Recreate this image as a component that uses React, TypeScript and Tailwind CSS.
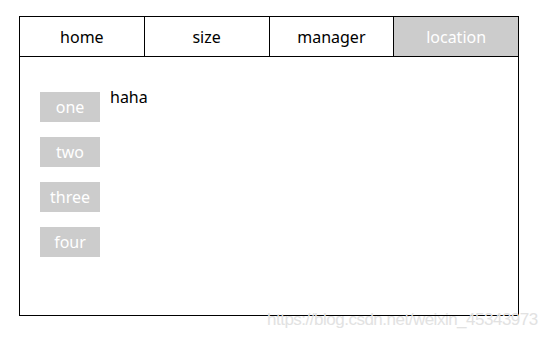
import React from "react";

const tabs = ["home", "size", "manager", "location"];
const buttons = ["one", "two", "three", "four"];

export default function App() {
  return (
    <div className="relative w-[548px] h-[338px] bg-white overflow-hidden" style={{ fontFamily: '"Noto Sans", sans-serif' }}>
      <div className="absolute left-[19px] top-[16px] w-[500px] h-[300px] border border-black flex flex-col">
        <div className="flex h-[40px] border-b border-black">
          {tabs.map((t, i) => (
            <div
              key={t}
              className={
                "flex-1 flex items-center justify-center text-[16px] " +
                (i < tabs.length - 1 ? "border-r border-black " : "") +
                (t === "location" ? "bg-[#cccccc] text-white" : "text-black")
              }
            >
              {t}
            </div>
          ))}
        </div>
        <div className="flex items-start pl-[20px] pt-[28px]">
          <div className="flex flex-col gap-[15px] mt-[7px]">
            {buttons.map((b) => (
              <div key={b} className="w-[60px] h-[30px] bg-[#cccccc] text-white text-[16px] flex items-center justify-center">
                {b}
              </div>
            ))}
          </div>
          <div className="ml-[10px] text-[16px] leading-6 text-black">haha</div>
        </div>
      </div>
      <div
        className="absolute left-[267px] top-[310px] text-[17px] leading-[20px] tracking-[-0.5px] text-[#e2e2e2] whitespace-nowrap"
        style={{ fontFamily: '"Liberation Sans", Arial, sans-serif' }}
      >
        https://blog.csdn.net/weixin_45343973
      </div>
    </div>
  );
}
